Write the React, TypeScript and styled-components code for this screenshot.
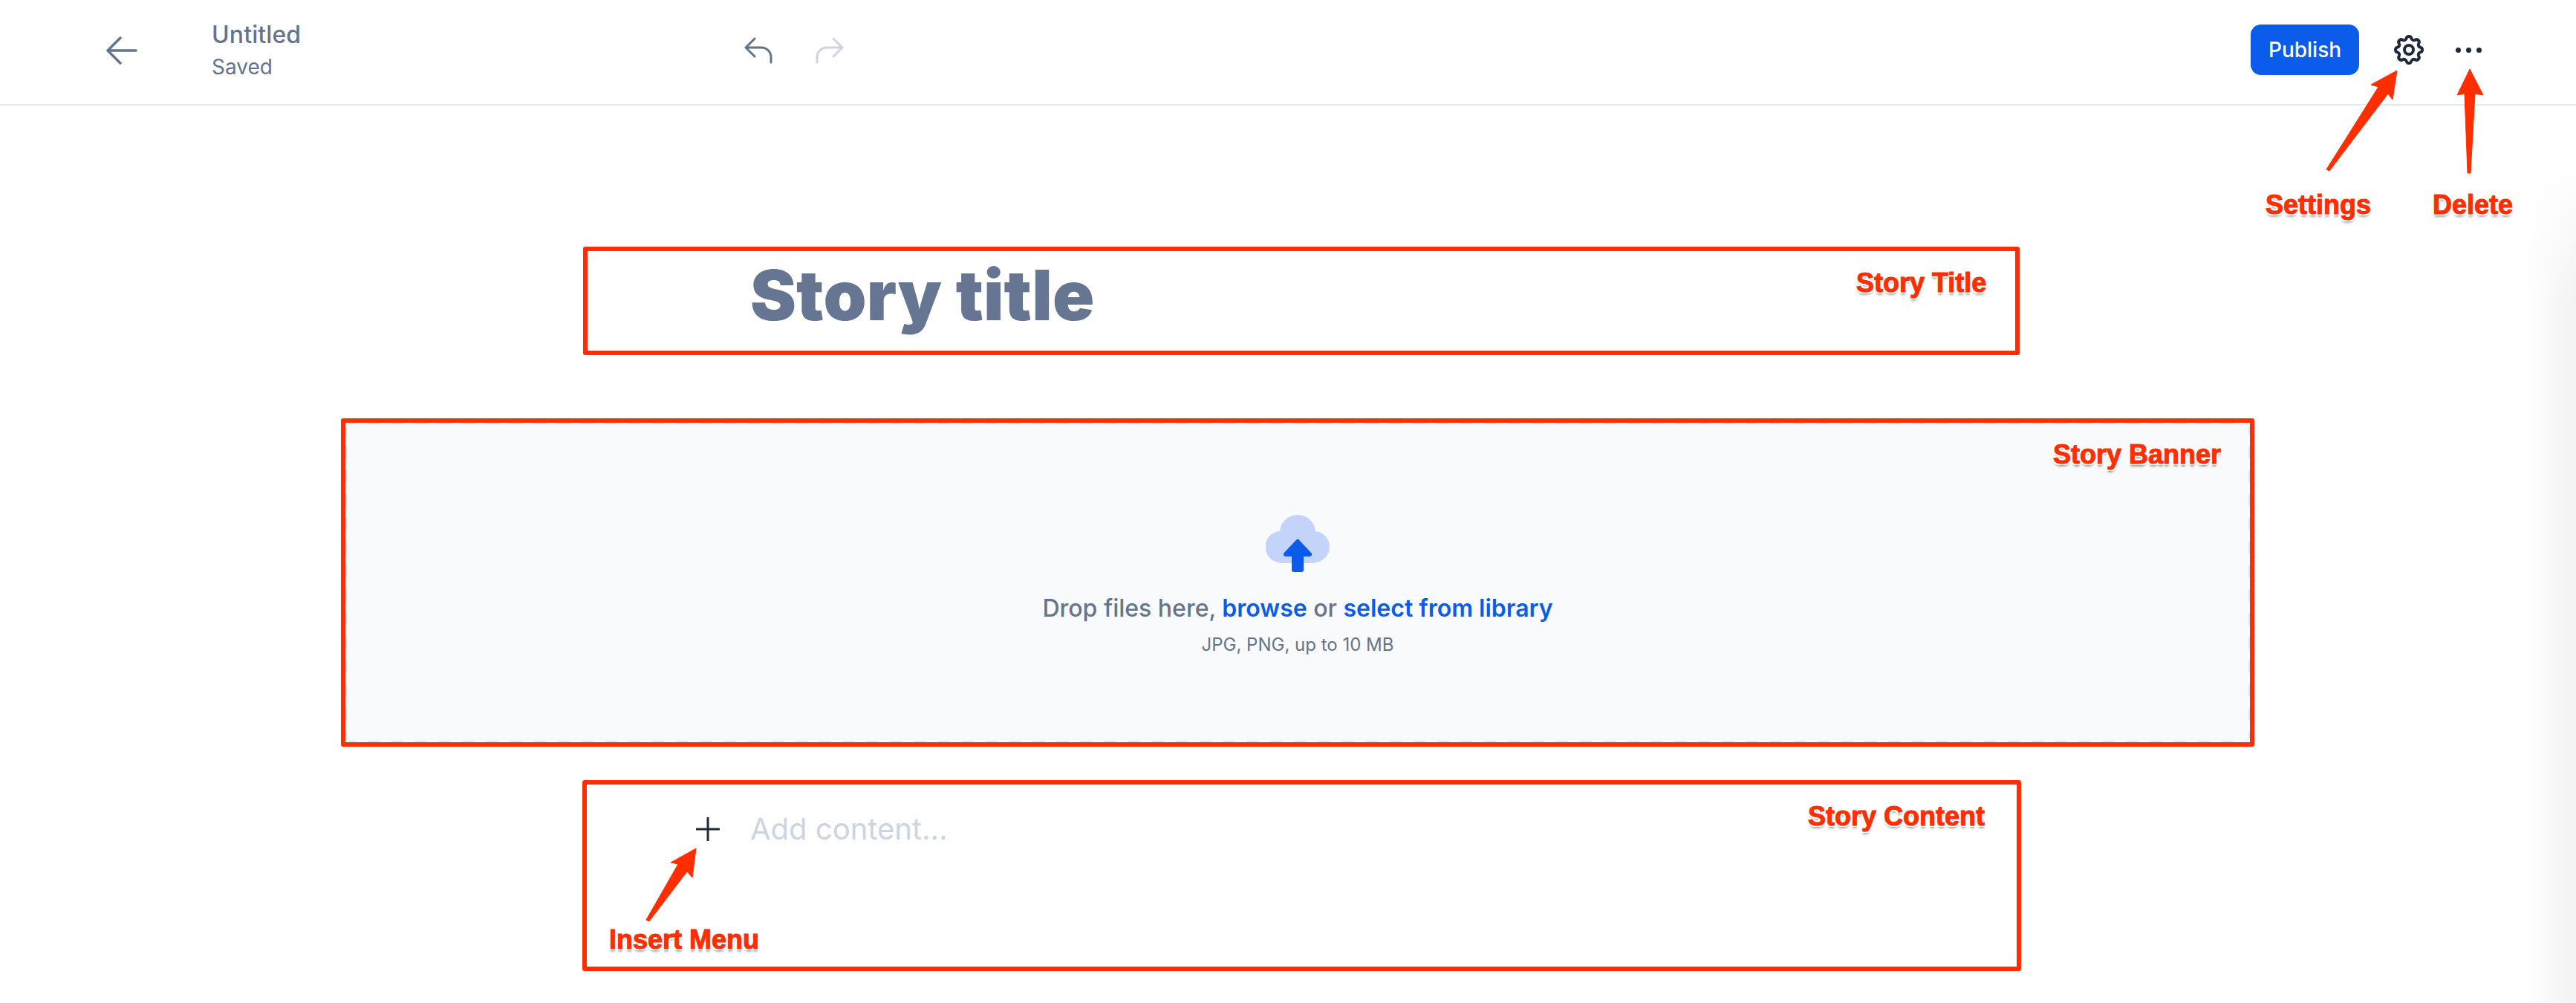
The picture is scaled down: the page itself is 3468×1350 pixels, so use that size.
import styled, { createGlobalStyle } from "styled-components";

const GlobalStyle = createGlobalStyle`
  html, body {
    margin: 0;
    padding: 0;
    background: #fff;
    font-family: Inter, "Liberation Sans", sans-serif;
  }
  * {
    box-sizing: border-box;
  }
`;

const Page = styled.div`
  position: relative;
  width: 3468px;
  height: 1350px;
  overflow: hidden;
  background: #fff;
`;

const Header = styled.header`
  display: flex;
  align-items: center;
  height: 142px;
  padding: 0 126px 0 143px;
  border-bottom: 2px solid #e2e8f0;
`;

const BackButton = styled.svg`
  width: 42px;
  height: 38px;
  margin-right: 100px;
  margin-top: -4px;
`;

const DocInfo = styled.div`
  display: flex;
  flex-direction: column;
  width: 717px;
`;

const DocName = styled.div`
  font-size: 32px;
  line-height: 38px;
  font-weight: 500;
  letter-spacing: 0.1px;
  color: #64748b;
  margin-top: -5px;
`;

const DocStatus = styled.div`
  font-size: 28px;
  line-height: 34px;
  color: #64748b;
  margin-top: 7px;
`;

const HistoryGroup = styled.div`
  display: flex;
  align-items: center;
  gap: 58px;
  margin-top: -4px;
`;

const HistoryIcon = styled.svg<{ $disabled?: boolean }>`
  width: 38px;
  height: 36px;
  color: ${(props) => (props.$disabled ? "#cbd5e1" : "#64748b")};
`;

const Actions = styled.div`
  display: flex;
  align-items: center;
  margin-left: auto;
  margin-top: -6px;
`;

const PublishButton = styled.button`
  width: 146px;
  height: 68px;
  border: 0;
  border-radius: 14px;
  background: #0b5ceb;
  color: #fff;
  font-family: inherit;
  font-size: 28px;
  font-weight: 500;
  margin-right: 43px;
`;

const GearIcon = styled.svg`
  width: 48px;
  height: 48px;
  color: #1e293b;
  margin-right: 39px;
`;

const Dots = styled.div`
  display: flex;
  gap: 7px;
  width: 36px;
`;

const Dot = styled.span`
  width: 7px;
  height: 7px;
  border-radius: 50%;
  background: #1e293b;
`;

const Main = styled.main`
  display: flex;
  flex-direction: column;
  align-items: center;
  padding-left: 26px;
`;

const Column = styled.div`
  width: 1474px;
`;

const StoryTitle = styled(Column)`
  margin-top: 190px;
  height: 146px;
  font-size: 93px;
  line-height: 130px;
  font-weight: 900;
  letter-spacing: 0.15px;
  color: #667591;
`;

const Banner = styled.div`
  display: flex;
  flex-direction: column;
  align-items: center;
  width: 2568px;
  height: 434px;
  margin-top: 89px;
  padding-top: 126px;
  border-radius: 16px;
  background:
    repeating-linear-gradient(90deg, #e2e8f0 0 16px, transparent 16px 32px) top left / 100% 4px no-repeat,
    repeating-linear-gradient(90deg, #e2e8f0 0 16px, transparent 16px 32px) bottom left / 100% 4px no-repeat,
    repeating-linear-gradient(0deg, #e2e8f0 0 16px, transparent 16px 32px) top left / 4px 100% no-repeat,
    repeating-linear-gradient(0deg, #e2e8f0 0 16px, transparent 16px 32px) top right / 4px 100% no-repeat,
    #f8fafc;
`;

const CloudIcon = styled.svg`
  width: 86px;
  height: 78px;
`;

const DropText = styled.div`
  margin-top: 28px;
  font-size: 32px;
  line-height: 40px;
  font-weight: 550;
  color: #64748b;
`;

const DropLink = styled.span`
  color: #0b5ceb;
  font-weight: 600;
`;

const DropHint = styled.div`
  margin-top: 14px;
  font-size: 24px;
  line-height: 30px;
  color: #64748b;
`;

const ContentRow = styled(Column)`
  display: flex;
  align-items: center;
  gap: 41px;
  margin-top: 91px;
  height: 48px;
  transform: translateX(-73px);
`;

const PlusIcon = styled.svg`
  width: 32px;
  height: 32px;
  color: #1e293b;
`;

const Placeholder = styled.div`
  font-size: 40px;
  line-height: 48px;
  color: #cbd5e1;
`;

/* everything below is the red markup drawn on top of the screenshot */
const Frame = styled.div<{ $x: number; $y: number; $w: number; $h: number }>`
  position: absolute;
  left: ${(props) => props.$x}px;
  top: ${(props) => props.$y}px;
  width: ${(props) => props.$w}px;
  height: ${(props) => props.$h}px;
  border: 6px solid #fe2e00;
  border-radius: 3px;
`;

const Label = styled.div<{ $x: number; $y: number }>`
  position: absolute;
  left: ${(props) => props.$x}px;
  top: ${(props) => props.$y}px;
  font-family: "Liberation Sans", Arial, sans-serif;
  font-size: 36px;
  line-height: 41px;
  font-weight: 700;
  white-space: nowrap;
  color: #fe2e00;
  -webkit-text-stroke: 1.1px #fe2e00;
  text-shadow:
    2px 2px 0 #fff,
    -2px 2px 0 #fff,
    2px -2px 0 #fff,
    -2px -2px 0 #fff,
    0 4px 3px rgba(0, 0, 0, 0.35);
`;

const ArrowLayer = styled.svg`
  position: absolute;
  left: 0;
  top: 0;
  width: 3468px;
  height: 1350px;
  pointer-events: none;
`;

const EdgeShade = styled.div`
  position: absolute;
  right: 0;
  top: 220px;
  bottom: 0;
  width: 70px;
  background: linear-gradient(90deg, rgba(241, 241, 241, 0), #f2f2f2);
  mask-image: linear-gradient(180deg, transparent, #000 190px);
`;

const frames = [
  { x: 785, y: 332, w: 1934, h: 146 },
  { x: 459, y: 563, w: 2576, h: 442 },
  { x: 784, y: 1050, w: 1937, h: 257 },
];

const labels = [
  { text: "Settings", x: 3050, y: 255 },
  { text: "Delete", x: 3275, y: 255 },
  { text: "Story Title", x: 2499, y: 360 },
  { text: "Story Banner", x: 2764, y: 591 },
  { text: "Story Content", x: 2434, y: 1078 },
  { text: "Insert Menu", x: 820, y: 1244 },
];

const arrows = [
  "3227,95 3192,114 3202,117 3132,228 3136,230 3215,126 3221,134",
  "3325,93 3308,128 3318,126 3322,233 3326,233 3332,126 3343,128",
  "937,1142 903,1161 913,1163 870,1238 874,1240 925,1173 932,1181",
];

export default function App() {
  return (
    <Page>
      <GlobalStyle />
      <Header>
        <BackButton viewBox="0 0 42 38" fill="none" stroke="#64748b" strokeWidth="3.5" strokeLinecap="round" strokeLinejoin="round">
          <path d="M19 2 2 19l17 17M2 19h38" />
        </BackButton>
        <DocInfo>
          <DocName>Untitled</DocName>
          <DocStatus>Saved</DocStatus>
        </DocInfo>
        <HistoryGroup>
          <HistoryIcon viewBox="0 0 38 36" fill="none" stroke="currentColor" strokeWidth="3" strokeLinecap="round" strokeLinejoin="round">
            <path d="M14 2 2 14l12 12M2 14h21a13 13 0 0 1 13 13v7" />
          </HistoryIcon>
          <HistoryIcon $disabled viewBox="0 0 38 36" fill="none" stroke="currentColor" strokeWidth="3" strokeLinecap="round" strokeLinejoin="round">
            <path d="M24 2l12 12-12 12M36 14H15A13 13 0 0 0 2 27v7" />
          </HistoryIcon>
        </HistoryGroup>
        <Actions>
          <PublishButton>Publish</PublishButton>
          <GearIcon viewBox="0 0 24 24" fill="none" stroke="currentColor" strokeWidth="2" strokeLinecap="round" strokeLinejoin="round">
            <path d="M10.325 4.317c.426-1.756 2.924-1.756 3.35 0a1.724 1.724 0 002.573 1.066c1.543-.94 3.31.826 2.37 2.37a1.724 1.724 0 001.065 2.572c1.756.426 1.756 2.924 0 3.35a1.724 1.724 0 00-1.066 2.573c.94 1.543-.826 3.31-2.37 2.37a1.724 1.724 0 00-2.572 1.065c-.426 1.756-2.924 1.756-3.35 0a1.724 1.724 0 00-2.573-1.066c-1.543.94-3.31-.826-2.37-2.37a1.724 1.724 0 00-1.065-2.572c-1.756-.426-1.756-2.924 0-3.35a1.724 1.724 0 001.066-2.573c-.94-1.543.826-3.31 2.37-2.37.996.608 2.296.07 2.572-1.065z" />
            <path d="M15 12a3 3 0 11-6 0 3 3 0 016 0z" />
          </GearIcon>
          <Dots>
            <Dot />
            <Dot />
            <Dot />
          </Dots>
        </Actions>
      </Header>
      <Main>
        <StoryTitle>Story title</StoryTitle>
        <Banner>
          <CloudIcon viewBox="0 0 86 78">
            <g fill="#c3d3f9">
              <circle cx="43" cy="24" r="24" />
              <circle cx="21" cy="43" r="21.5" />
              <circle cx="65" cy="43" r="21" />
              <rect x="20" y="30" width="46" height="35" />
            </g>
            <path
              fill="#0b5ceb"
              stroke="#0b5ceb"
              strokeWidth="6"
              strokeLinejoin="round"
              d="M43 36 59 53H48V74H38V53H27z"
            />
          </CloudIcon>
          <DropText>
            Drop files here, <DropLink>browse</DropLink> or <DropLink>select from library</DropLink>
          </DropText>
          <DropHint>JPG, PNG, up to 10 MB</DropHint>
        </Banner>
        <ContentRow>
          <PlusIcon viewBox="0 0 32 32" fill="none" stroke="currentColor" strokeWidth="3" strokeLinecap="round">
            <path d="M16 1v30M1 16h30" />
          </PlusIcon>
          <Placeholder>Add content...</Placeholder>
        </ContentRow>
      </Main>
      <EdgeShade />
      {frames.map((f) => (
        <Frame key={f.x} $x={f.x} $y={f.y} $w={f.w} $h={f.h} />
      ))}
      <ArrowLayer viewBox="0 0 3468 1350">
        {arrows.map((points) => (
          <polygon key={points} points={points} fill="#fe2e00" stroke="#fe2e00" strokeWidth="1" strokeLinejoin="round" />
        ))}
      </ArrowLayer>
      {labels.map((l) => (
        <Label key={l.text} $x={l.x} $y={l.y}>
          {l.text}
        </Label>
      ))}
    </Page>
  );
}
